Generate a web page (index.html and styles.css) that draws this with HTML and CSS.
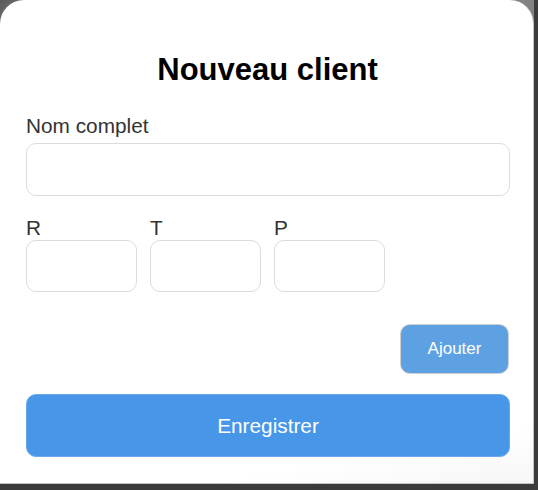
FILE: index.html
```html
<!DOCTYPE html>
<html lang="fr">
<head>
<meta charset="utf-8">
<title>Nouveau client</title>
<link rel="stylesheet" href="styles.css">
</head>
<body>
<div class="stage">
  <form class="card">
    <h1 class="title">Nouveau client</h1>
    <label class="label" for="nom">Nom complet</label>
    <input class="field field-wide" id="nom" type="text">
    <div class="row">
      <div class="group">
        <label class="label" for="r">R</label>
        <input class="field field-small" id="r" type="text">
      </div>
      <div class="group">
        <label class="label" for="t">T</label>
        <input class="field field-small" id="t" type="text">
      </div>
      <div class="group">
        <label class="label" for="p">P</label>
        <input class="field field-small" id="p" type="text">
      </div>
    </div>
    <div class="actions">
      <button class="btn-add" type="button">Ajouter</button>
    </div>
    <button class="btn-save" type="button">Enregistrer</button>
  </form>
</div>
</body>
</html>
```
FILE: styles.css
```css
html, body {
  margin: 0;
  padding: 0;
}
body {
  background: #3b3b3b;
  font-family: "Liberation Sans", Arial, sans-serif;
  width: 538px;
  height: 490px;
  overflow: hidden;
}
.stage {
  width: 534px;
  background: linear-gradient(135deg, #5a5a5a 0%, #8a8a8a 6%, #7a7a7a 100%);
}
.card {
  box-sizing: border-box;
  width: 534px;
  height: 484px;
  margin: 0;
  padding: 52px 24px 26px 26px;
  background: linear-gradient(170deg, #ffffff 90%, #f6f6f6 100%);
  border-radius: 24px 24px 0 0;
  border-right: 1px solid #c4c4c4;
  border-bottom: 1px solid #c4c4c4;
  display: flex;
  flex-direction: column;
}
.title {
  margin: 0 0 26px 0;
  font-size: 31px;
  line-height: 36px;
  font-weight: bold;
  color: #000;
  text-align: center;
}
.label {
  display: block;
  font-size: 20.8px;
  line-height: 24px;
  color: #333;
}
.field {
  box-sizing: border-box;
  border: 1px solid #dcdcdc;
  border-radius: 10px;
  background: #fff;
  font: inherit;
  outline: none;
}
.field-wide {
  width: 484px;
  height: 53px;
  margin-top: 5px;
}
.row {
  display: flex;
  gap: 13px;
  margin-top: 20px;
}
.group {
  display: flex;
  flex-direction: column;
}
.field-small {
  width: 111px;
  height: 52px;
}
.actions {
  display: flex;
  justify-content: flex-end;
  margin-top: 32px;
}
.btn-add {
  box-sizing: border-box;
  width: 109px;
  height: 50px;
  background: #5ea1e3;
  color: #fff;
  border: 1px solid #cfcfcf;
  border-radius: 10px;
  font-family: "Liberation Sans", Arial, sans-serif;
  font-size: 17px;
  padding: 0;
}
.btn-save {
  box-sizing: border-box;
  width: 484px;
  height: 63px;
  margin-top: 20px;
  background: #4796e8;
  color: #fff;
  border: 1px solid #6aa9ec;
  border-radius: 10px;
  font-family: "Liberation Sans", Arial, sans-serif;
  font-size: 20.8px;
  padding: 0;
}
```
